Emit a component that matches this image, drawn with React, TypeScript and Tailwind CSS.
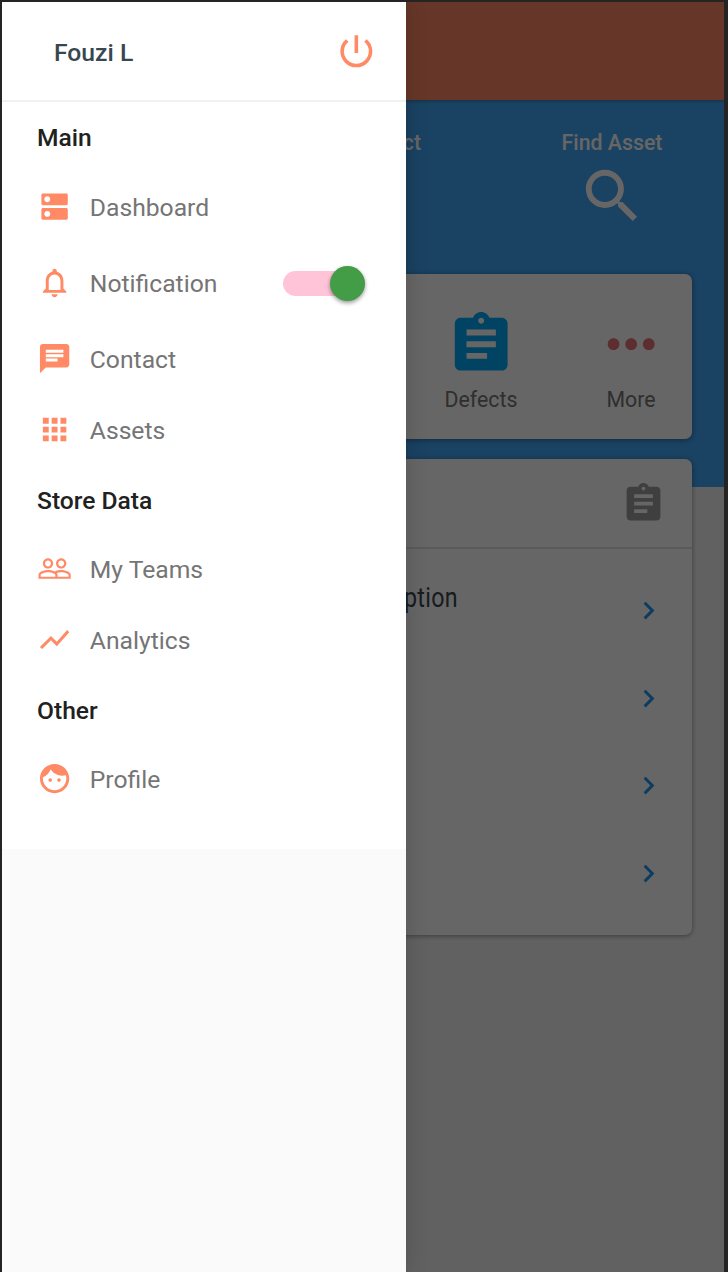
import type { ReactNode } from "react";
import type { IconType } from "react-icons";
import {
  MdApps,
  MdAssignment,
  MdChat,
  MdChevronRight,
  MdDns,
  MdFace,
  MdMoreHoriz,
  MdPeopleOutline,
  MdPowerSettingsNew,
  MdSearch,
  MdShowChart,
} from "react-icons/md";

function BellIcon({ size }: { size?: number | string }) {
  return (
    <svg viewBox="0 0 24 24" width={size} height={size} fill="currentColor">
      <path d="M12 22c1.1 0 2-.9 2-2h-4c0 1.100.9 2 2 2zm6-6v-5c0-3.070-1.630-5.640-4.500-6.320V4c0-.83-.67-1.500-1.500-1.500s-1.500.67-1.500 1.500v.68C7.640 5.360 6 7.920 6 11v5l-2 2v1h16v-1l-2-2zm-2 1H8v-6c0-2.480 1.510-4.500 4-4.500s4 2.020 4 4.500v6z" />
    </svg>
  );
}

function Heading({ children }: { children: ReactNode }) {
  return (
    <h2 className="flex h-[69.2px] items-center pt-1 pl-[35px] text-[24.600px] leading-none font-medium text-[#212121]">
      {children}
    </h2>
  );
}

function Item({ icon: Icon, label }: { icon: IconType | typeof BellIcon; label: string }) {
  return (
    <div className="flex h-[70.4px] items-center gap-[18px] pl-[34.600px] text-[#ff8a65]">
      <Icon size={35.2} />
      <span className="pt-[3.600px] text-[24.700px] leading-none text-[#757575]">{label}</span>
    </div>
  );
}

function Toggle() {
  return (
    <div className="mt-px flex h-[25px] w-[82px] items-center justify-end rounded-full bg-[#ffc4d8]">
      <div className="size-[35px] shrink-0 rounded-full bg-[#439d46] shadow-[0_2px_4px_rgba(0,0,0,0.4)]" />
    </div>
  );
}

function Drawer() {
  return (
    <aside className="absolute inset-y-0 left-0 w-[404px] bg-[#fafafa] shadow-[0_0_20px_rgba(0,0,0,0.18)]">
      <div className="h-[847px] bg-white">
        <header className="flex h-[100px] items-center justify-between border-b-2 border-[#f1f1f1] pr-7 pl-[52px]">
          <span className="pt-1 text-[24.700px] leading-none font-medium text-[#37474f]">Fouzi L</span>
          <MdPowerSettingsNew size={42.7} className="text-[#ff8a65]" />
        </header>
        <nav>
          <Heading>Main</Heading>
          <Item icon={MdDns} label="Dashboard" />
          <div className="flex h-[82.2px] items-center justify-between pr-[41px]">
            <Item icon={BellIcon} label="Notification" />
            <Toggle />
          </div>
          <Item icon={MdChat} label="Contact" />
          <Item icon={MdApps} label="Assets" />
          <Heading>Store Data</Heading>
          <Item icon={MdPeopleOutline} label="My Teams" />
          <Item icon={MdShowChart} label="Analytics" />
          <Heading>Other</Heading>
          <Item icon={MdFace} label="Profile" />
        </nav>
      </div>
    </aside>
  );
}

function Dashboard() {
  return (
    <main className="h-full bg-[linear-gradient(#42a5f5_485.5px,#f3f3f3_485.5px)]">
      <div className="h-[98px] bg-[#ff8a65] shadow-[0_1px_3px_rgba(0,0,0,0.3)]" />
      <div className="flex h-[174px] justify-end pt-8 text-[21.300px] leading-[22px] font-medium text-white">
        <div className="w-[133px] text-right whitespace-nowrap">Report Defect</div>
        <div className="ml-[91px] flex w-[200px] flex-col items-center">
          <span>Find Asset</span>
          <MdSearch size={70.4} className="mt-[7px]" />
        </div>
        <div className="w-3" />
      </div>
      <section className="mx-8 flex h-[165px] justify-end rounded-[7px] bg-white pr-px text-[21.300px] leading-none text-[#757575] shadow-[0_1px_5px_rgba(0,0,0,0.4)]">
        <div className="flex w-[150px] flex-col items-center pt-[35px]">
          <MdAssignment size={70.4} className="text-[#03a9f4]" />
          <span className="mt-2.5">Defects</span>
        </div>
        <div className="mr-[-15px] flex w-[150px] flex-col items-center pt-[35px]">
          <MdMoreHoriz size={70.4} className="text-[#e57373]" />
          <span className="mt-2.5">More</span>
        </div>
      </section>
      <section className="mx-8 mt-5 h-[476px] rounded-[7px] bg-white shadow-[0_1px_5px_rgba(0,0,0,0.4)]">
        <div className="flex h-[90px] items-center justify-end border-b-2 border-[#e0e0e0] pr-[26px]">
          <MdAssignment size={45} className="text-[#9e9e9e]" />
        </div>
        <div className="flex justify-between pr-[26px] pl-[264px]">
          <span className="w-[160px] origin-right scale-x-[0.83] pt-[34px] text-right text-[28px] leading-[29px] tracking-[0.4px] text-[#37474f]">
            Description
          </span>
          <div className="flex flex-col pt-[17.500px] text-[#2196f3]">
            {[0, 1, 2, 3].map((row) => (
              <div key={row} className="flex h-[87.8px] items-center">
                <MdChevronRight size={35.2} />
              </div>
            ))}
          </div>
        </div>
      </section>
    </main>
  );
}

export default function App() {
  return (
    <div className="h-[1272px] w-[728px] bg-[#242424] pt-0.5 pr-1 pl-0.5 font-['Roboto',sans-serif]">
      <div className="relative h-full overflow-hidden">
        <Dashboard />
        <div className="absolute inset-0 bg-black/60" />
        <Drawer />
      </div>
    </div>
  );
}
